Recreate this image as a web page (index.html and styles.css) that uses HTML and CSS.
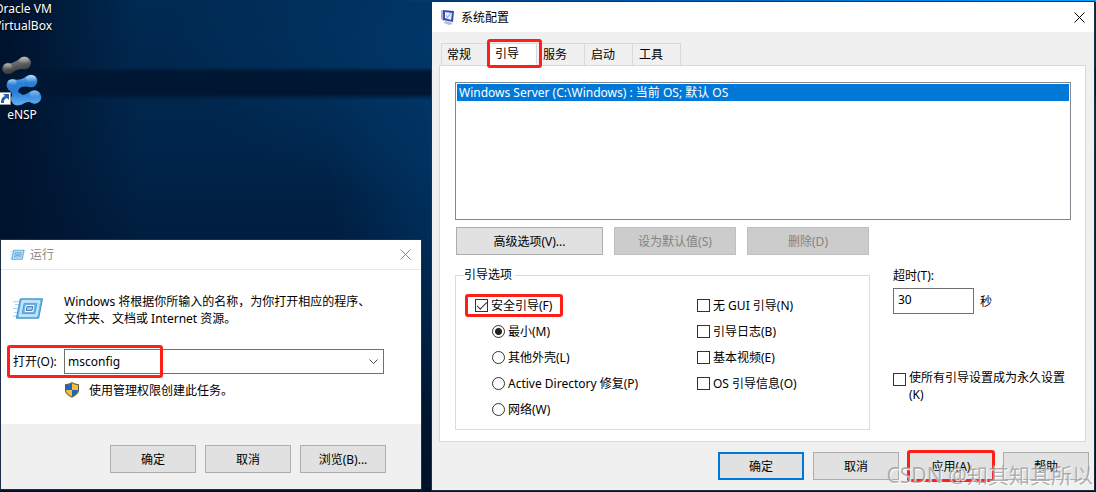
FILE: index.html
```html
<!DOCTYPE html>
<html lang="zh-CN">
<head>
<meta charset="utf-8">
<title>系统配置</title>
<link rel="stylesheet" href="styles.css">
</head>
<body>
<main class="desktop">
  <div class="shortcuts">
    <div class="shortcut shortcut-vm">Oracle VM VirtualBox</div>
    <div class="shortcut">
      <svg class="ensp-icon" viewBox="0 0 44 52" aria-hidden="true">
        <defs>
          <linearGradient id="gray" gradientUnits="userSpaceOnUse" x1="14" y1="0" x2="18" y2="20"><stop offset="0" stop-color="#999"/><stop offset=".5" stop-color="#666"/><stop offset="1" stop-color="#2c2c2c"/></linearGradient>
          <linearGradient id="blue" gradientUnits="userSpaceOnUse" x1="0" y1="20" x2="0" y2="50"><stop offset="0" stop-color="#79bdf5"/><stop offset=".3" stop-color="#2c7fd6"/><stop offset=".6" stop-color="#277bd4"/><stop offset="1" stop-color="#5dacf0"/></linearGradient>
          <linearGradient id="shine" x1="0" y1="0" x2="0" y2="1"><stop offset="0" stop-color="#fff" stop-opacity=".5"/><stop offset="1" stop-color="#fff" stop-opacity="0"/></linearGradient>
        </defs>
        <g fill="url(#gray)">
          <circle cx="8" cy="14.500" r="5.800"/><circle cx="24.500" cy="9" r="6.500"/>
          <path d="M6 9C12 10 15 8 19 5L27 15C21 15 16 15 12 19Z"/>
        </g>
        <g fill="url(#blue)">
          <circle cx="12.500" cy="31" r="6"/><circle cx="31" cy="27" r="6.300"/>
          <circle cx="17.500" cy="45" r="6.500"/><circle cx="34.500" cy="43" r="6.800"/>
          <path d="M12 25C18 27 23 25 27 22L32 33C25 32 20 32 18.500 36C18 39 20 41 22 41C26 41 28 38 32 37L34 49C28 47 26 48 21 51L11 46C14 42 12 38 8 35Z"/>
        </g>
        <g fill="url(#shine)">
          <ellipse cx="8" cy="12.500" rx="4" ry="3"/><ellipse cx="24" cy="6.500" rx="5" ry="3.500"/>
          <ellipse cx="12" cy="28.500" rx="4.500" ry="3"/><ellipse cx="31" cy="24.500" rx="5" ry="3.500"/>
          <ellipse cx="34.500" cy="40" rx="5" ry="3.500"/>
        </g>
        <path fill="#fff" stroke="#999" d="M-.5 38.500H10.500V50.500H-.5Z"/>
        <path fill="#2861a8" d="M3 40h6v6l-2-2c-3 1-3 3-3 5H1c0-4 1-6 4-7Z"/>
      </svg>
      <span>eNSP</span>
    </div>
  </div>

  <section class="window run" aria-label="运行">
    <header class="titlebar run-title">
      <svg class="run-small" viewBox="0 0 32 24" aria-hidden="true"><use href="#run-art"/></svg>
      <h1 class="title">运行</h1>
      <button class="close" aria-label="关闭"><svg viewBox="0 0 11 11"><path d="M.5.5l10 10M10.500.5l-10 10"/></svg></button>
    </header>
    <div class="run-body">
      <div class="run-intro">
        <svg class="run-large" viewBox="0 0 32 24" aria-hidden="true">
          <g id="run-art">
            <path stroke="#a5cde9" d="M0 4.500h7M2 7.500h5M0 11.500h5M1 15.500h4M0 19.500h4"/>
            <path fill="#6bb9e8" stroke="#3d93cb" d="M7.500 1.500h23l-4 20h-23Z"/>
            <path fill="#b5e0f8" stroke="#d5f0ff" d="M9.500 3.500h18l-3 16h-18Z"/>
            <path fill="#6fb7e6" stroke="#4b9bd0" d="M11.500 6.500h13l-2 10h-13Z"/>
            <path fill="#c3ddf5" stroke="#fff" d="M13.500 8.500h8l-1 6h-8Z"/>
            <path fill="#a9c6ea" stroke="#4d74ae" d="M14.500 9.500h6l-1 4h-6Z"/>
          </g>
        </svg>
        <p class="run-text">Windows 将根据你所输入的名称，为你打开相应的程序、<br>文件夹、文档或 Internet 资源。</p>
      </div>
      <div class="open-row">
        <label for="command">打开(O):</label>
        <div class="combo">
          <input id="command" type="text" value="msconfig">
          <button class="combo-arrow" aria-label="展开"><svg viewBox="0 0 9 6"><path d="M.5.5l4 4 4-4"/></svg></button>
        </div>
      </div>
      <div class="admin-row">
        <svg class="shield" viewBox="0 0 14 16" aria-hidden="true">
          <path fill="#f9bd35" d="M7 0c2 1 4 2 7 2v6c0 4-3 6-7 8-4-2-7-4-7-8V2c3 0 5-1 7-2Z"/>
          <path fill="#1769c0" d="M7 1v7H1V3c2 0 4-1 6-2ZM7 8h6c0 3-3 5-6 7Z"/>
          <path fill="none" stroke="#4c5559" d="M7 .7c2 1 4 2 6.500 2V8c0 3-3 5-6.500 7C3.500 13 .5 11 .5 8V2.700C3 2.700 5 1.700 7 .7Z"/>
        </svg>
        <span>使用管理权限创建此任务。</span>
      </div>
    </div>
    <footer class="run-footer">
      <button class="btn">确定</button>
      <button class="btn">取消</button>
      <button class="btn">浏览(B)...</button>
    </footer>
  </section>

  <section class="window config" aria-label="系统配置">
    <header class="titlebar">
      <svg class="config-icon" viewBox="0 0 14 15" aria-hidden="true">
        <path fill="#b8bec8" d="M4 11l5 1 3 2-4 1-5-2Z"/>
        <path fill="#a7acd3" d="M0 0l3 1v10l-3-2Z"/>
        <path fill="#3a4bb8" d="M2 0l11 1-1 11-10-2Z"/>
        <path fill="#e0f0ff" d="M4 2l7 1-1 7-6-2Z"/>
        <path fill="none" stroke="#6b9fdc" d="M5.500 5.500l1 2 3-4"/>
      </svg>
      <h1 class="title">系统配置</h1>
      <button class="close close-dark" aria-label="关闭"><svg viewBox="0 0 11 11"><path d="M.5.5l10 10M10.500.5l-10 10"/></svg></button>
    </header>
    <div class="config-body">
      <div class="tabs" role="tablist">
        <button class="tab" role="tab">常规</button>
        <button class="tab tab-active" role="tab" aria-selected="true">引导</button>
        <button class="tab" role="tab">服务</button>
        <button class="tab" role="tab">启动</button>
        <button class="tab" role="tab">工具</button>
      </div>
      <div class="panel" role="tabpanel">
        <ul class="systems">
          <li>Windows Server (C:\Windows) : 当前 OS; 默认 OS</li>
        </ul>
        <div class="actions">
          <button class="btn btn-wide">高级选项(V)...</button>
          <button class="btn btn-mid" disabled>设为默认值(S)</button>
          <button class="btn btn-mid" disabled>删除(D)</button>
        </div>
        <div class="settings">
          <fieldset class="boot">
            <legend>引导选项</legend>
            <div class="boot-grid">
              <div class="options">
                <label class="option safe"><input type="checkbox" checked>安全引导(F)</label>
                <label class="option nested"><input type="radio" name="mode" checked>最小(M)</label>
                <label class="option nested"><input type="radio" name="mode">其他外壳(L)</label>
                <label class="option nested"><input type="radio" name="mode">Active Directory 修复(P)</label>
                <label class="option nested"><input type="radio" name="mode">网络(W)</label>
              </div>
              <div class="options">
                <label class="option"><input type="checkbox">无 GUI 引导(N)</label>
                <label class="option"><input type="checkbox">引导日志(B)</label>
                <label class="option"><input type="checkbox">基本视频(E)</label>
                <label class="option"><input type="checkbox">OS 引导信息(O)</label>
              </div>
            </div>
          </fieldset>
          <div class="side">
            <label for="timeout">超时(T):</label>
            <div class="timeout"><input id="timeout" type="text" value="30"><span>秒</span></div>
            <label class="option permanent"><input type="checkbox"><span>使所有引导设置成为永久设置(K)</span></label>
          </div>
        </div>
      </div>
      <footer class="config-footer">
        <button class="btn btn-default">确定</button>
        <button class="btn">取消</button>
        <button class="btn btn-apply">应用(A)</button>
        <button class="btn">帮助</button>
      </footer>
    </div>
  </section>
  <div class="watermark">CSDN @知其知其所以</div>
</main>
</body>
</html>
```
FILE: styles.css
```css
*, *::before, *::after { box-sizing: border-box; }

body {
  margin: 0;
  font: 12px/17px "Noto Sans", "Noto Sans CJK SC", sans-serif;
  color: #000;
}

button, input { font: inherit; color: inherit; margin: 0; }
svg { display: block; flex: none; overflow: visible; }

.desktop {
  position: relative;
  min-height: 100vh;
  overflow: hidden;
  background:
    linear-gradient(90deg, transparent 35%, #0058b0 60%, #00a0ff) top / 100% 2px no-repeat,
    linear-gradient(180deg, transparent, #001733 5px, #001733 27px, transparent) 0 67px / 100% 33px no-repeat,
    linear-gradient(90deg, #00122c, transparent 140px),
    radial-gradient(ellipse 300px 160px at 470px 40px, #00386a, transparent),
    radial-gradient(ellipse 120px 260px at 450px 160px, #003362, transparent),
    linear-gradient(180deg, #002a52, #00254a 30%, #001d3e 50%, #00122a);
}

/* Desktop shortcuts */
.shortcuts { width: 54px; color: #fff; }
.shortcut {
  display: flex;
  flex-direction: column;
  width: 44px;
  text-align: center;
  text-shadow: 0 1px 2px #000;
}
.shortcut-vm {
  display: block;
  width: 70px;
  margin-left: -12px;
  margin-bottom: 20px;
}
.ensp-icon { width: 44px; height: 52px; }

/* Windows */
.window { position: absolute; box-shadow: 0 0 0 1px #1d2f45; }
.titlebar {
  display: flex;
  align-items: center;
  height: 30px;
  background: #fff;
}
.title { margin: 0; flex: 1; font-size: 12px; font-weight: 400; }
.close { padding: 0; border: 0; background: none; }
.close svg { width: 11px; height: 11px; fill: none; stroke: #888; }
.close-dark svg { stroke: #000; }

.btn {
  width: 86px;
  height: 28px;
  padding: 0;
  border: 1px solid #adadad;
  background: #e1e1e1;
}
.btn:disabled { border-color: #bfbfbf; background: #ccc; color: #838383; }
.btn-wide { width: 147px; }
.btn-mid { width: 122px; }
.btn-default { border: 2px solid #0078d7; }

/* Red highlight frames */
.tab-active, .safe, .open-row, .btn-apply { position: relative; }
.tab-active::after, .safe::after, .open-row::after, .btn-apply::after {
  content: "";
  position: absolute;
  border: 3px solid #fc2018;
  border-radius: 3px;
  pointer-events: none;
}

/* Run dialog */
.run { left: 1px; top: 240px; width: 420px; background: #fff; }
.run-title {
  height: 30px;
  padding: 0 10px 0 9px;
  gap: 5px;
  border-bottom: 1px solid #e8e8e8;
  color: #888;
}
.run-small { width: 15px; height: 12px; }
.run-body { height: 154px; padding: 23px 37px 0 12px; }
.run-intro { display: flex; gap: 20px; }
.run-large { width: 31px; height: 24px; margin-top: 4px; }
.run-text { margin: 0; }
.open-row { display: flex; align-items: center; margin-top: 22px; }
.open-row label { width: 51px; }
.open-row::after { left: -6px; top: -4px; width: 156px; height: 33px; }
.combo {
  display: flex;
  flex: 1;
  height: 25px;
  border: 1px solid #707070;
}
.combo input { flex: 1; min-width: 0; padding: 0 3px; border: 0; background: none; outline: 0; }
.combo-arrow { width: 18px; padding: 0 4px; border: 0; background: none; }
.combo-arrow svg { width: 9px; height: 6px; fill: none; stroke: #444; }
.admin-row { display: flex; gap: 10px; margin: 8px 0 0 52px; }
.shield { width: 14px; height: 16px; }
.run-footer {
  display: flex;
  justify-content: flex-end;
  gap: 9px;
  padding: 21px 35px 16px;
  background: #f0f0f0;
}

/* System configuration */
.config { left: 432px; right: 2px; top: 2px; background: #f0f0f0; }
.config > .titlebar { padding: 0 9px; gap: 6px; }
.config-icon { width: 14px; height: 15px; }
.config-body { padding: 11px 8px 10px 7px; }
.tabs { display: flex; height: 22px; padding-left: 2px; }
.tab {
  width: 48px;
  padding: 0 6px;
  border: 1px solid #d9d9d9;
  border-width: 1px 1px 0 0;
  background: #f0f0f0;
  text-align: left;
}
.tab:first-child { padding-left: 5px; border-left-width: 1px; }
.tab-active {
  height: 23px;
  padding-bottom: 4px;
  background: #fff;
}
.tab-active::after { left: -2px; top: -5px; width: 55px; height: 29px; z-index: 1; }
.panel { padding: 16px 14px 11px 15px; border: 1px solid #d9d9d9; background: #fff; }
.systems {
  height: 138px;
  margin: 0;
  padding: 1px;
  border: 1px solid #828790;
  list-style: none;
}
.systems li { padding: 0 2px; background: #0078d7; color: #fff; }
.actions { display: flex; gap: 11px; margin-top: 7px; padding-left: 1px; }
.settings {
  display: grid;
  grid-template-columns: minmax(0, 415fr) minmax(0, 178fr);
  gap: 23px;
  margin-top: 12px;
}
.boot { min-width: 0; margin: 0; padding: 9px 8px 7px; border: 1px solid #dcdcdc; }
.boot legend { height: 16px; padding: 0 3px 0 0; line-height: 16px; }
.boot-grid { display: grid; grid-template-columns: minmax(0, 233fr) minmax(0, 164fr); }
.options { display: flex; flex-direction: column; align-items: flex-start; }
.option { display: flex; align-items: center; gap: 3px; height: 26px; }
.safe { margin-left: 11px; }
.safe::after { left: -10px; top: 2px; width: 98px; height: 23px; }
.nested { margin-left: 28px; }

input[type="checkbox"], input[type="radio"] {
  flex: none;
  width: 13px;
  height: 13px;
  appearance: none;
  border: 1px solid #333;
  background: #fff;
}
input[type="radio"] { border-radius: 50%; }
input[type="radio"]:checked { background: radial-gradient(circle, #222 3px, #fff 4px); }
input[type="checkbox"]:checked::before {
  content: "";
  display: block;
  width: 10px;
  height: 5px;
  margin: 2px 1px;
  border: solid #333;
  border-width: 0 0 1px 1px;
  transform: rotate(-45deg);
}

.timeout { display: flex; align-items: center; gap: 6px; margin-top: 4px; }
.timeout input { width: 81px; height: 26px; padding: 0 4px 3px; border: 1px solid #707070; }
.permanent { align-items: flex-start; height: auto; margin-top: 55px; }
.permanent input { margin-top: 4px; }
.config-footer { display: flex; justify-content: flex-end; gap: 9px; margin: 10px -3px 0 0; }
.btn-apply::after { left: -2px; top: -3px; width: 88px; height: 32px; }

.watermark {
  position: absolute;
  right: 3px;
  bottom: 3px;
  font-size: 21px;
  line-height: 28px;
  color: rgba(145, 145, 145, 0.7);
  text-shadow: 1px 1px 1px #fff;
  pointer-events: none;
}
```
